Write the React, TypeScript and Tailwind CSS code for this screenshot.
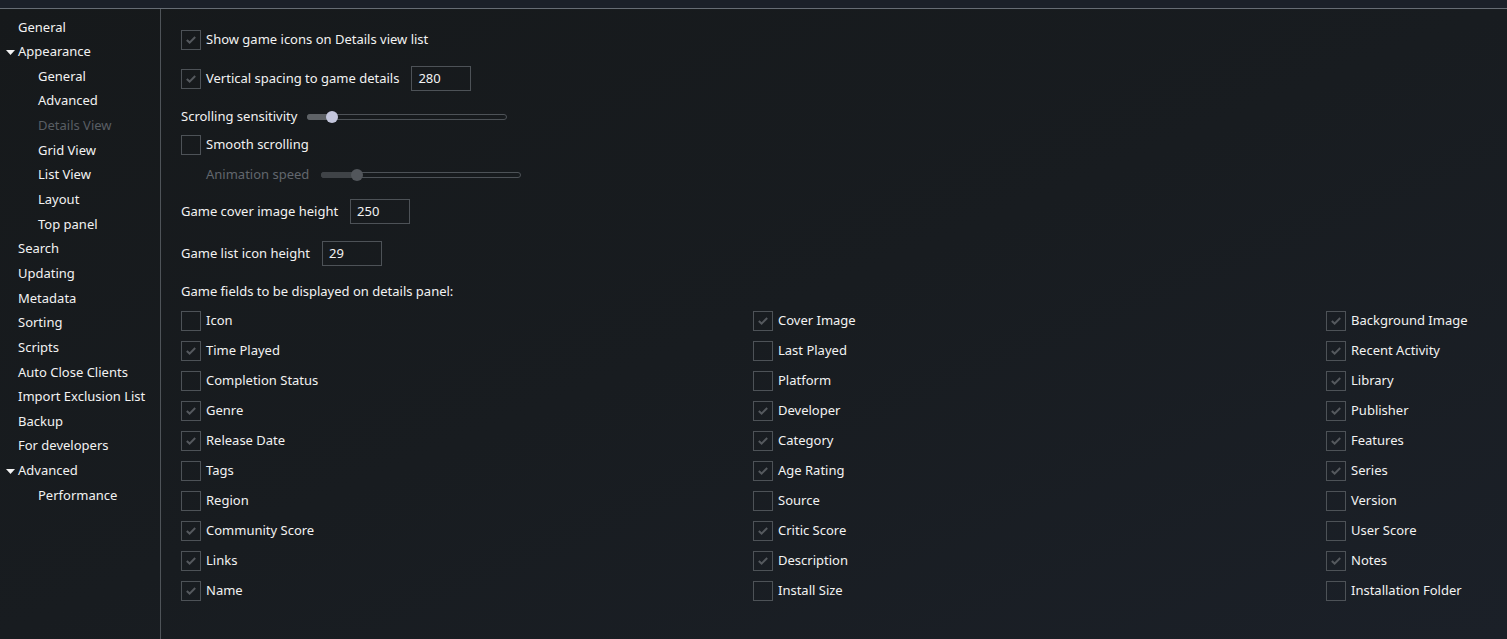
import React from "react";

const font = { fontFamily: '"Noto Sans", "Open Sans", sans-serif' };

type NavItem = { label: string; level: 0 | 1; expand?: boolean; disabled?: boolean };

const nav: NavItem[] = [
  { label: "General", level: 0 },
  { label: "Appearance", level: 0, expand: true },
  { label: "General", level: 1 },
  { label: "Advanced", level: 1 },
  { label: "Details View", level: 1, disabled: true },
  { label: "Grid View", level: 1 },
  { label: "List View", level: 1 },
  { label: "Layout", level: 1 },
  { label: "Top panel", level: 1 },
  { label: "Search", level: 0 },
  { label: "Updating", level: 0 },
  { label: "Metadata", level: 0 },
  { label: "Sorting", level: 0 },
  { label: "Scripts", level: 0 },
  { label: "Auto Close Clients", level: 0 },
  { label: "Import Exclusion List", level: 0 },
  { label: "Backup", level: 0 },
  { label: "For developers", level: 0 },
  { label: "Advanced", level: 0, expand: true },
  { label: "Performance", level: 1 },
];

const fields: [string, boolean][][] = [
  [
    ["Icon", false],
    ["Time Played", true],
    ["Completion Status", false],
    ["Genre", true],
    ["Release Date", true],
    ["Tags", false],
    ["Region", false],
    ["Community Score", true],
    ["Links", true],
    ["Name", true],
  ],
  [
    ["Cover Image", true],
    ["Last Played", false],
    ["Platform", false],
    ["Developer", true],
    ["Category", true],
    ["Age Rating", true],
    ["Source", false],
    ["Critic Score", true],
    ["Description", true],
    ["Install Size", false],
  ],
  [
    ["Background Image", true],
    ["Recent Activity", true],
    ["Library", true],
    ["Publisher", true],
    ["Features", true],
    ["Series", true],
    ["Version", false],
    ["User Score", false],
    ["Notes", true],
    ["Installation Folder", false],
  ],
];

function Box({ checked }: { checked: boolean }) {
  return (
    <div className="w-[20px] h-[20px] shrink-0 border border-[#4d5257] flex items-center justify-center">
      {checked && (
        <svg width="12" height="10" viewBox="0 0 12 10">
          <path d="M1.8 5 L4.6 7.6 L10.2 2" fill="none" stroke="#55595e" strokeWidth="2" />
        </svg>
      )}
    </div>
  );
}

function Check({ checked, label }: { checked: boolean; label: string }) {
  return (
    <div className="flex items-center h-[20px]">
      <Box checked={checked} />
      <span className="ml-[5px] text-[13px] text-[#f2f2f2] whitespace-nowrap">{label}</span>
    </div>
  );
}

function Slider({ pos, disabled }: { pos: number; disabled?: boolean }) {
  return (
    <div className="relative w-[200px] h-[12px] flex items-center">
      <div className="w-full h-[6px] rounded-full border border-[#4d5257]" />
      <div
        className={`absolute left-0 top-[3px] h-[6px] rounded-l-full ${disabled ? "bg-[#3f4347]" : "bg-[#5e6266]"}`}
        style={{ width: pos }}
      />
      <div
        className={`absolute top-0 w-[12px] h-[12px] rounded-full ${disabled ? "bg-[#52565b]" : "bg-[#c3c6dc]"}`}
        style={{ left: pos - 6 }}
      />
    </div>
  );
}

function NumInput({ value }: { value: string }) {
  return (
    <div className="w-[60px] h-[25px] border border-[#4d5257] flex items-center pl-[6px] text-[13px] text-[#f2f2f2]">
      {value}
    </div>
  );
}

export default function App() {
  return (
    <div className="w-[1507px] h-[639px] overflow-hidden bg-[#16191c] flex flex-col" style={font}>
      <div className="h-[8px] bg-[#1b2029] shrink-0" />
      <div className="h-[1px] bg-[#666c74] shrink-0" />
      <div className="flex flex-1 min-h-0 bg-gradient-to-br from-[#16191b] via-[#181c20] to-[#1b2028]">
        <div className="w-[161px] shrink-0 border-r border-[#4e5358] pt-[6px] text-[13px]">
          {nav.map((n, i) => (
            <div key={i} className="h-[24.65px] flex items-center relative">
              {n.expand && (
                <svg className="absolute left-[6px] top-[10px]" width="9" height="5" viewBox="0 0 9 5">
                  <path d="M0 0 L9 0 L4.5 5 Z" fill="#f2f2f2" />
                </svg>
              )}
              <span
                className={`${n.level === 0 ? "pl-[18px]" : "pl-[38px]"} ${
                  n.disabled ? "text-[#595e64]" : "text-[#f2f2f2]"
                } whitespace-nowrap`}
              >
                {n.label}
              </span>
            </div>
          ))}
        </div>
        <div className="flex-1 pl-[20px] pt-[21px] flex flex-col text-[13px] text-[#f2f2f2] min-w-0">
          <Check checked label="Show game icons on Details view list" />
          <div className="mt-[16px] flex items-center h-[25px]">
            <Check checked label="Vertical spacing to game details" />
            <div className="ml-[12px]">
              <NumInput value="280" />
            </div>
          </div>
          <div className="mt-[16px] flex items-center h-[20px]">
            <span className="whitespace-nowrap">Scrolling sensitivity</span>
            <div className="ml-[10px]">
              <Slider pos={25} />
            </div>
          </div>
          <div className="mt-[8px]">
            <Check checked={false} label="Smooth scrolling" />
          </div>
          <div className="mt-[10px] flex items-center h-[20px] pl-[25px]">
            <span className="whitespace-nowrap text-[#62676d]">Animation speed</span>
            <div className="ml-[12px]">
              <Slider pos={36} disabled />
            </div>
          </div>
          <div className="mt-[14px] flex items-center h-[25px]">
            <span className="whitespace-nowrap">Game cover image height</span>
            <div className="ml-[12px]">
              <NumInput value="250" />
            </div>
          </div>
          <div className="mt-[17px] flex items-center h-[25px]">
            <span className="whitespace-nowrap">Game list icon height</span>
            <div className="ml-[12px]">
              <NumInput value="29" />
            </div>
          </div>
          <div className="mt-[16px] h-[20px] flex items-center whitespace-nowrap">
            Game fields to be displayed on details panel:
          </div>
          <div className="mt-[9px] flex">
            {fields.map((col, ci) => (
              <div key={ci} className={`flex flex-col gap-[10px] shrink-0 ${ci === 0 ? "w-[572px]" : ci === 1 ? "w-[573px]" : "w-[200px]"}`}>
                {col.map(([label, checked]) => (
                  <Check key={label} checked={checked} label={label} />
                ))}
              </div>
            ))}
          </div>
        </div>
      </div>
    </div>
  );
}
